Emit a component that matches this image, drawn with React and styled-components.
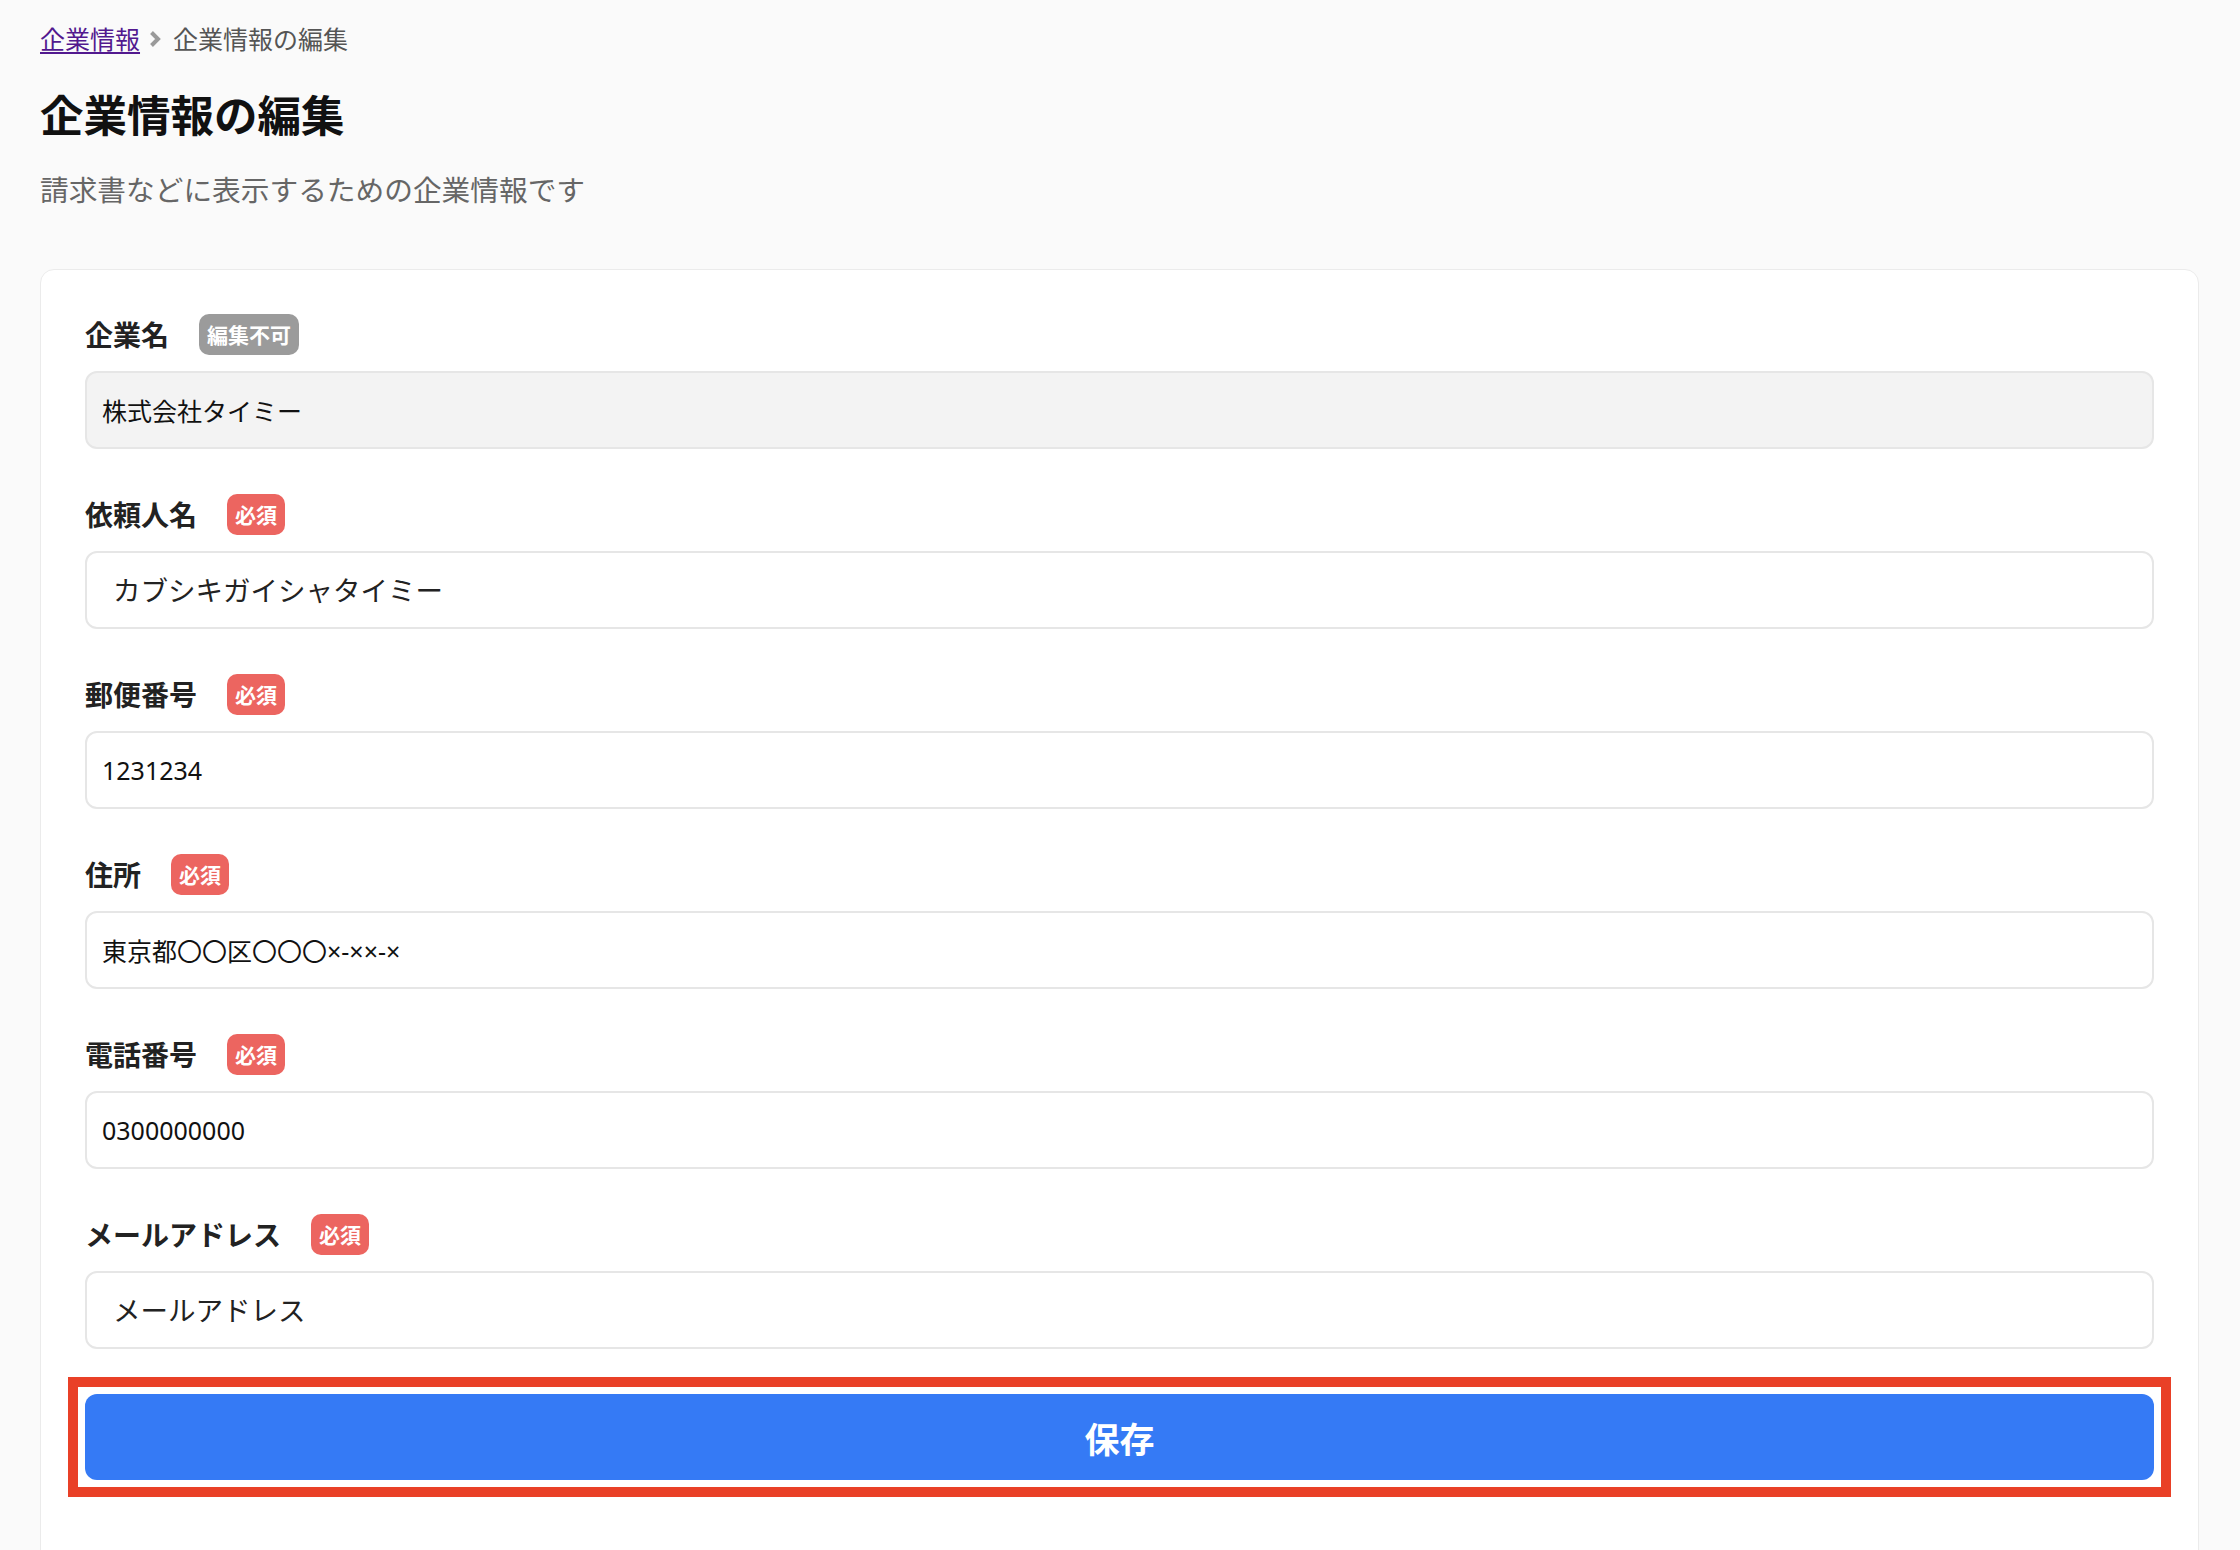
import styled, { createGlobalStyle } from "styled-components";

const GlobalStyle = createGlobalStyle`
    * {
        box-sizing: border-box;
    }
    body {
        margin: 0;
        background-color: #fafafa;
        font-family: "Noto Sans CJK JP", "Noto Sans", sans-serif;
        color: #222222;
    }
`;

const fields = [
    { label: "企業名", badge: "編集不可", locked: true, value: "株式会社タイミー" },
    { label: "依頼人名", badge: "必須", placeholder: "カブシキガイシャタイミー" },
    { label: "郵便番号", badge: "必須", value: "1231234" },
    { label: "住所", badge: "必須", value: "東京都〇〇区〇〇〇×-××-×" },
    { label: "電話番号", badge: "必須", value: "0300000000" },
    { label: "メールアドレス", badge: "必須", placeholder: "メールアドレス" },
];

export default function App() {
    return (
        <Page>
            <GlobalStyle />
            <Breadcrumb>
                <CrumbLink href="#">企業情報</CrumbLink>
                <Chevron width="14" height="18" viewBox="0 0 14 18">
                    <polyline points="3.5,2.5 10,9 3.5,15.5" fill="none" stroke="#9a9a9a" strokeWidth="4" strokeLinejoin="miter" />
                </Chevron>
                <CrumbCurrent>企業情報の編集</CrumbCurrent>
            </Breadcrumb>
            <Title>企業情報の編集</Title>
            <Subtitle>請求書などに表示するための企業情報です</Subtitle>

            <Card>
                {fields.map((field) => (
                    <Field key={field.label}>
                        <LabelRow>
                            <Label>{field.label}</Label>
                            <Badge $locked={field.locked}>{field.badge}</Badge>
                        </LabelRow>
                        <Input
                            $locked={field.locked}
                            readOnly
                            defaultValue={field.value || ""}
                            placeholder={field.placeholder}
                        />
                    </Field>
                ))}
                <SaveFrame>
                    <SaveButton>保存</SaveButton>
                </SaveFrame>
            </Card>
        </Page>
    );
}

const Page = styled.div`
    padding: 0 41px 0 40px;
`;

const Breadcrumb = styled.nav`
    display: flex;
    align-items: center;
    padding-top: 20px;
    height: 56px;
    font-size: 25px;
    line-height: 36px;
`;

const CrumbLink = styled.a`
    color: #52198f;
    text-decoration: underline;
    text-underline-offset: 3px;
    text-decoration-thickness: 2px;
`;

const Chevron = styled.svg`
    margin: 2px 11px 0 8px;
`;

const CrumbCurrent = styled.span`
    color: #555555;
`;

const Title = styled.h1`
    margin: 28px 0 0;
    font-size: 43.5px;
    line-height: 60px;
    font-weight: 700;
    color: #111111;
`;

const Subtitle = styled.p`
    margin: 25px 0 0;
    font-size: 28.7px;
    line-height: 40px;
    color: #666666;
`;

const Card = styled.div`
    margin-top: 60px;
    background-color: #ffffff;
    border: 1px solid #ebebeb;
    border-radius: 14px;
    padding: 43px 44px 120px;
    display: flex;
    flex-direction: column;
    gap: 44px;
`;

const Field = styled.div`
    display: flex;
    flex-direction: column;
    gap: 16px;
`;

const LabelRow = styled.div`
    display: flex;
    align-items: center;
    gap: 30px;
    height: 42px;
`;

const Label = styled.span`
    font-size: 28px;
    font-weight: 700;
    color: #222222;
`;

const Badge = styled.span`
    height: 41px;
    padding: 0 8px;
    border-radius: 10px;
    background-color: ${(p) => (p.$locked ? "#9b9b9b" : "#ec6560")};
    color: #ffffff;
    font-size: 21px;
    font-weight: 700;
    line-height: 41px;
`;

const Input = styled.input`
    width: 100%;
    height: 78px;
    border: 2px solid #e6e6e6;
    border-radius: 12px;
    padding: 0 15px;
    background-color: ${(p) => (p.$locked ? "#f3f3f3" : "#ffffff")};
    font-family: "Noto Sans", "Noto Sans CJK JP", sans-serif;
    font-size: 25px;
    color: #111111;
    outline: none;

    &:placeholder-shown {
        padding-left: 26px;
        font-size: 27.5px;
    }

    &::placeholder {
        color: #222222;
        opacity: 1;
    }
`;

const SaveFrame = styled.div`
    margin-top: 1px;
    outline: 10px solid #e94027;
    outline-offset: 7px;
`;

const SaveButton = styled.button`
    display: block;
    width: 100%;
    height: 86px;
    border: none;
    border-radius: 12px;
    background-color: #357af5;
    color: #ffffff;
    font-family: "Noto Sans CJK JP", "Noto Sans", sans-serif;
    font-size: 35px;
    font-weight: 700;
    cursor: pointer;
`;
